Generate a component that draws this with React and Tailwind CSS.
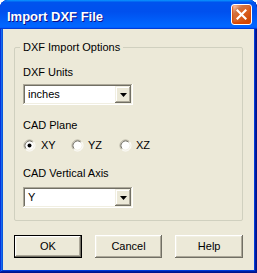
import React from "react";

const font = { fontFamily: '"Liberation Sans", Arial, sans-serif' };

function Radio({ checked }) {
  return (
    <svg width="13" height="13" viewBox="0 0 13 13" className="shrink-0">
      <circle cx="6.5" cy="6.5" r="5" fill="#fff" />
      <path d="M2.61 10.39 A5.5 5.5 0 0 1 10.39 2.61" fill="none" stroke="#aca899" strokeWidth="1" />
      <path d="M10.39 2.61 A5.5 5.5 0 0 1 2.61 10.39" fill="none" stroke="#ffffff" strokeWidth="1" />
      <path d="M3.32 9.68 A4.5 4.5 0 0 1 9.68 3.32" fill="none" stroke="#716f64" strokeWidth="1" />
      <path d="M9.68 3.32 A4.5 4.5 0 0 1 3.32 9.68" fill="none" stroke="#f1efe2" strokeWidth="1" />
      {checked && <circle cx="6.5" cy="6.5" r="2" fill="#000" />}
    </svg>
  );
}

function Combo({ value }) {
  return (
    <div className="flex h-[21px] w-[110px] bg-white p-[2px] shadow-[inset_-1px_-1px_#ffffff,inset_1px_1px_#aca899,inset_-2px_-2px_#f1efe2,inset_2px_2px_#716f64]">
      <div className="flex flex-1 items-center pl-[3px] text-[11px] leading-[13px] text-black">{value}</div>
      <div className="flex h-[17px] w-[16px] items-center justify-center bg-[#ece9d8] shadow-[inset_-1px_-1px_#716f64,inset_1px_1px_#f1efe2,inset_-2px_-2px_#aca899,inset_2px_2px_#ffffff]">
        <svg width="7" height="4" viewBox="0 0 7 4">
          <path d="M0 0H7L3.5 4Z" fill="#000" />
        </svg>
      </div>
    </div>
  );
}

function Button({ children, def }) {
  const inner = (
    <div className="flex h-full w-full items-center justify-center bg-[#ece9d8] text-[11px] leading-[13px] text-black shadow-[inset_-1px_-1px_#716f64,inset_1px_1px_#ffffff,inset_-2px_-2px_#aca899,inset_2px_2px_#f1efe2]">
      {children}
    </div>
  );
  return (
    <div className={def ? "h-[23px] w-[68px] border border-black" : "h-[23px] w-[68px]"}>{inner}</div>
  );
}

export default function App() {
  return (
    <div style={font} className="h-[273px] w-[257px] bg-white">
      <div className="flex h-[273px] w-[257px] flex-col overflow-hidden rounded-t-[8px] bg-[#0055ea] pb-[3px] shadow-[inset_-1px_-1px_#00138c,inset_1px_1px_#0831d9,inset_-2px_-2px_#001ea0,inset_2px_2px_#166aee,inset_-3px_-3px_#003bda,inset_3px_3px_#0855dd]">
        <div className="flex h-[29px] shrink-0 items-center justify-between rounded-t-[7px] bg-[linear-gradient(180deg,#0997ff,#0053ee_8%,#0050ee_40%,#06f_88%,#06f_93%,#005bff_95%,#003dd7_96%,#003dd7)] pl-[7px] pr-[5px] pt-[3px]">
          <span className="text-[13px] font-bold leading-[15px] text-white [text-shadow:1px_1px_#0f1089]">Import DXF File</span>
          <div className="mb-[3px] flex h-[21px] w-[21px] items-center justify-center rounded-[3px] border border-white bg-[radial-gradient(circle_at_90%_90%,#cc4600_0%,#dc6527_55%,#cd7546_70%,#ffccb2_90%,#ffffff_100%)] shadow-[inset_0_-1px_2px_1px_#da4600]">
            <svg width="11" height="11" viewBox="0 0 11 11">
              <path d="M1.5 1.5L9.5 9.5M9.5 1.5L1.5 9.5" stroke="#fff" strokeWidth="2.2" strokeLinecap="square" />
            </svg>
          </div>
        </div>
        <div className="mx-[3px] flex flex-1 flex-col bg-[#ece9d8] px-[11px]">
          <div className="relative mt-[18px] rounded-[2px] border border-[#d0d0bf] pb-[12px] pl-[8px]">
            <div className="absolute left-[5px] top-[-7px] bg-[#ece9d8] px-[3px] text-[11px] leading-[13px] text-black">
              DXF Import Options
            </div>
            <div className="mt-[18px] text-[11px] leading-[13px] text-black">DXF Units</div>
            <div className="mt-[5px]">
              <Combo value="inches" />
            </div>
            <div className="mt-[14px] text-[11px] leading-[13px] text-black">CAD Plane</div>
            <div className="mt-[7px] flex h-[13px] items-center">
              <div className="flex w-[48px] items-center gap-[5px] text-[11px] leading-[13px] text-black">
                <Radio checked />
                <span>XY</span>
              </div>
              <div className="flex w-[48px] items-center gap-[4px] text-[11px] leading-[13px] text-black">
                <Radio />
                <span>YZ</span>
              </div>
              <div className="flex w-[48px] items-center gap-[4px] text-[11px] leading-[13px] text-black">
                <Radio />
                <span>XZ</span>
              </div>
            </div>
            <div className="mt-[15px] text-[11px] leading-[13px] text-black">CAD Vertical Axis</div>
            <div className="mt-[7px]">
              <Combo value="Y" />
            </div>
          </div>
          <div className="mt-[14px] flex gap-[13px]">
            <Button def>OK</Button>
            <Button>Cancel</Button>
            <Button>Help</Button>
          </div>
        </div>
      </div>
    </div>
  );
}
